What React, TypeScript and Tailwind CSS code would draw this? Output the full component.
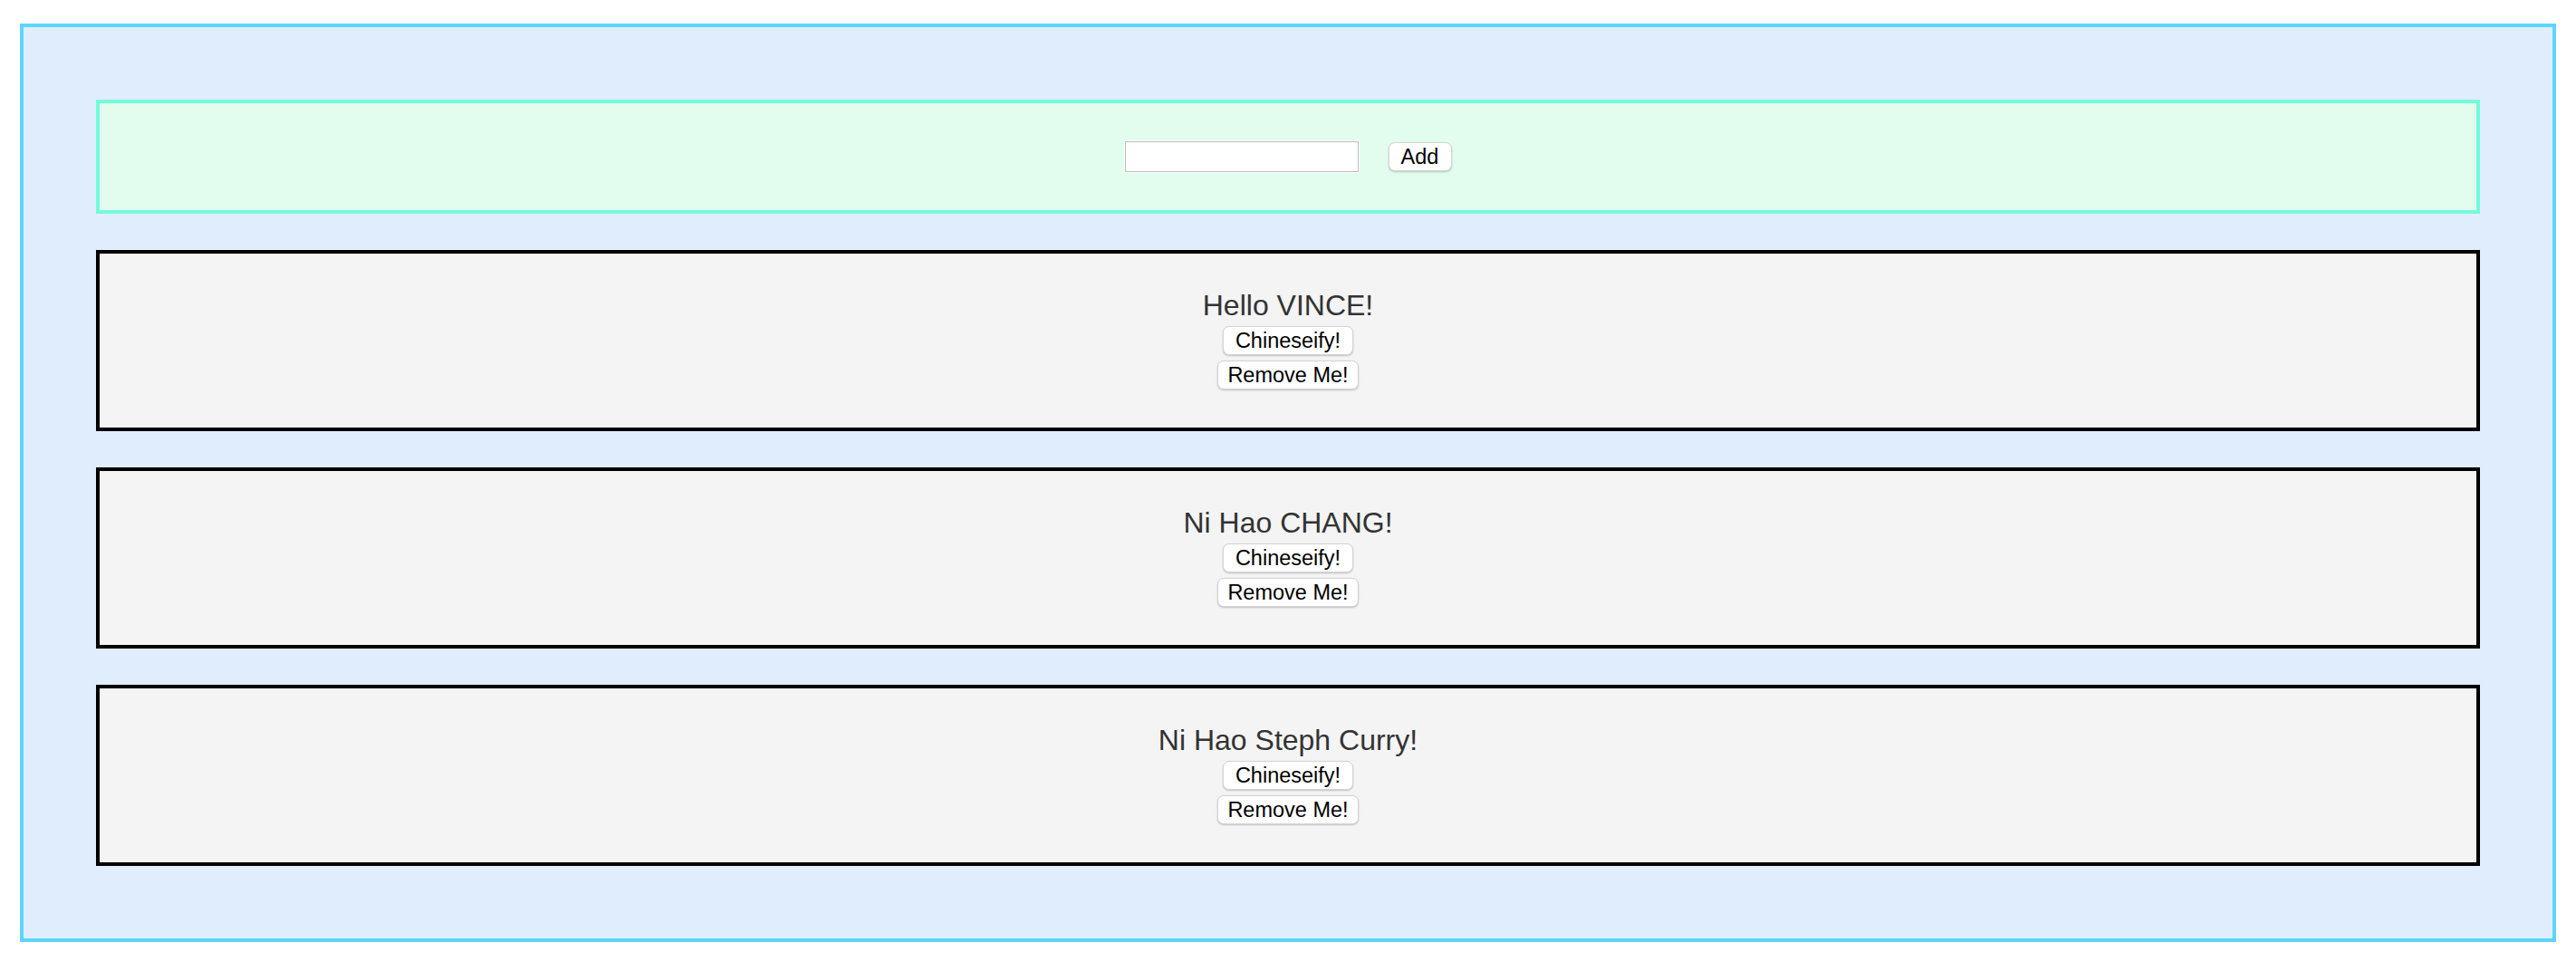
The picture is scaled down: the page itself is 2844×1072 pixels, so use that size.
const people = ['Hello VINCE!', 'Ni Hao CHANG!', 'Ni Hao Steph Curry!'];

const font = "font-['Helvetica','Liberation_Sans',Arial,sans-serif]";

function Btn({ children, w }: { children: string; w: string }) {
  return (
    <button
      className={`${w} h-[32px] rounded-[7px] border border-[#d4d4d4] bg-white pt-[1px] text-[23.5px] leading-none text-black shadow-[0_1px_2px_rgba(0,0,0,0.22)] ${font}`}
    >
      {children}
    </button>
  );
}

function Card({ title }: { title: string }) {
  return (
    <div className="flex h-[200px] flex-col items-center border-4 border-black bg-[#f4f4f4] pt-[38px]">
      <h2 className={`h-[38px] text-[32px] leading-[38px] text-[#333333] ${font}`}>{title}</h2>
      <div className="mt-[4px] flex flex-col items-center gap-[6px]">
        <Btn w="w-[144px]">Chineseify!</Btn>
        <Btn w="w-[156px]">Remove Me!</Btn>
      </div>
    </div>
  );
}

export default function App() {
  return (
    <div className="h-[1072px] w-[2844px] bg-white pt-[26px] pl-[22px]">
      <div className="flex h-[1014px] w-[2800px] flex-col gap-[40px] border-4 border-[#5cd6fc] bg-[#e0edfc] p-[80px]">
        {/* add form */}
        <div className="flex h-[126px] items-center justify-center gap-[33px] border-4 border-[#73fbda] bg-[#e2fdee]">
          <input
            type="text"
            className="h-[34px] w-[258px] border border-[#bdbdbd] bg-white shadow-[0_0_0_1px_#ffffff] outline-none"
          />
          <Btn w="w-[70px]">Add</Btn>
        </div>

        {people.map((p) => (
          <Card key={p} title={p} />
        ))}
      </div>
    </div>
  );
}
